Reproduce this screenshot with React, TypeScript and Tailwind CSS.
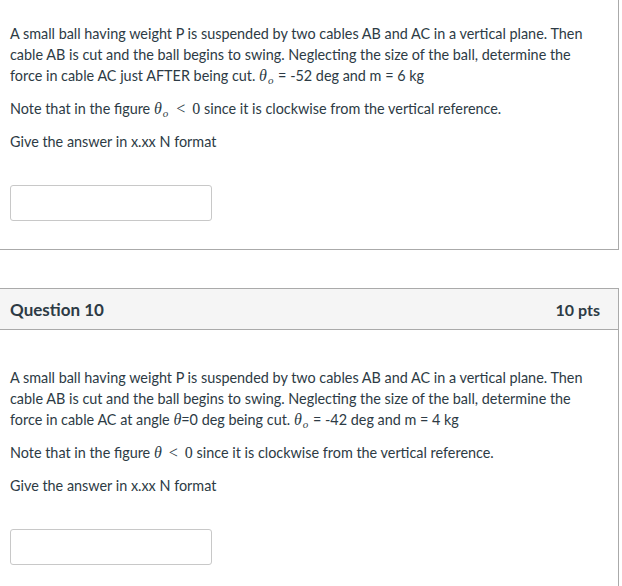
import React from "react";

const Theta = ({ sub }: { sub?: boolean }) => (
  <span className="font-['Liberation_Serif',serif] text-[16px] leading-[16px] italic">
    θ
    {sub && (
      <span className="relative top-[3px] text-[11px] leading-[11px] italic ml-[1px] mr-[1px]">o</span>
    )}
  </span>
);

const Lt = () => (
  <span className="font-['Liberation_Serif',serif] text-[16px] leading-[16px] mx-[7px]">&lt;</span>
);
const Zero = () => <span className="font-['Liberation_Serif',serif] text-[16px] leading-[16px]">0</span>;

const Input = () => (
  <div className="w-[202px] h-[36px] border border-[#c8c8c8] rounded-[3px] bg-white" />
);

export default function App() {
  return (
    <div className="w-[622px] h-[586px] bg-white overflow-hidden font-['Lato','Noto_Sans',sans-serif] text-[14.4px] leading-[21px] text-[#2d3b45]">
      {/* Card 1 */}
      <div className="w-[619px] h-[250px] border-r border-b border-[#aaaaaa] pl-[10px] pr-[30px] pt-[23px]">
        <p>
          A small ball having weight P is suspended by two cables AB and AC in a vertical plane. Then cable AB is cut and the ball begins to swing. Neglecting the size of the ball, determine the force in cable AC just AFTER being cut. <Theta sub /> = -52 deg and m = 6 kg
        </p>
        <p className="mt-[12px]">
          Note that in the figure <Theta sub />
          <Lt />
          <Zero /> since it is clockwise from the vertical reference.
        </p>
        <p className="mt-[12px]">Give the answer in x.xx N format</p>
        <div className="mt-[33px]">
          <Input />
        </div>
      </div>
      {/* Card 2 */}
      <div className="mt-[38px] w-[619px] h-[300px] border-r border-t border-[#aaaaaa]">
        <div className="h-[41px] bg-[#f5f5f5] border-b border-[#aaaaaa] flex items-center justify-between pl-[10px] pr-[18px]">
          <span className="text-[17px] font-bold text-[#2d3b45]">Question 10</span>
          <span className="text-[16px] font-bold text-[#2d3b45]">10 pts</span>
        </div>
        <div className="pl-[10px] pr-[30px] pt-[37px]">
          <p>
            A small ball having weight P is suspended by two cables AB and AC in a vertical plane. Then cable AB is cut and the ball begins to swing. Neglecting the size of the ball, determine the force in cable AC at angle <Theta />=0 deg being cut. <Theta sub /> = -42 deg and m = 4 kg
          </p>
          <p className="mt-[12px]">
            Note that in the figure <Theta />
            <Lt />
            <Zero /> since it is clockwise from the vertical reference.
          </p>
          <p className="mt-[12px]">Give the answer in x.xx N format</p>
          <div className="mt-[33px]">
            <Input />
          </div>
        </div>
      </div>
    </div>
  );
}
